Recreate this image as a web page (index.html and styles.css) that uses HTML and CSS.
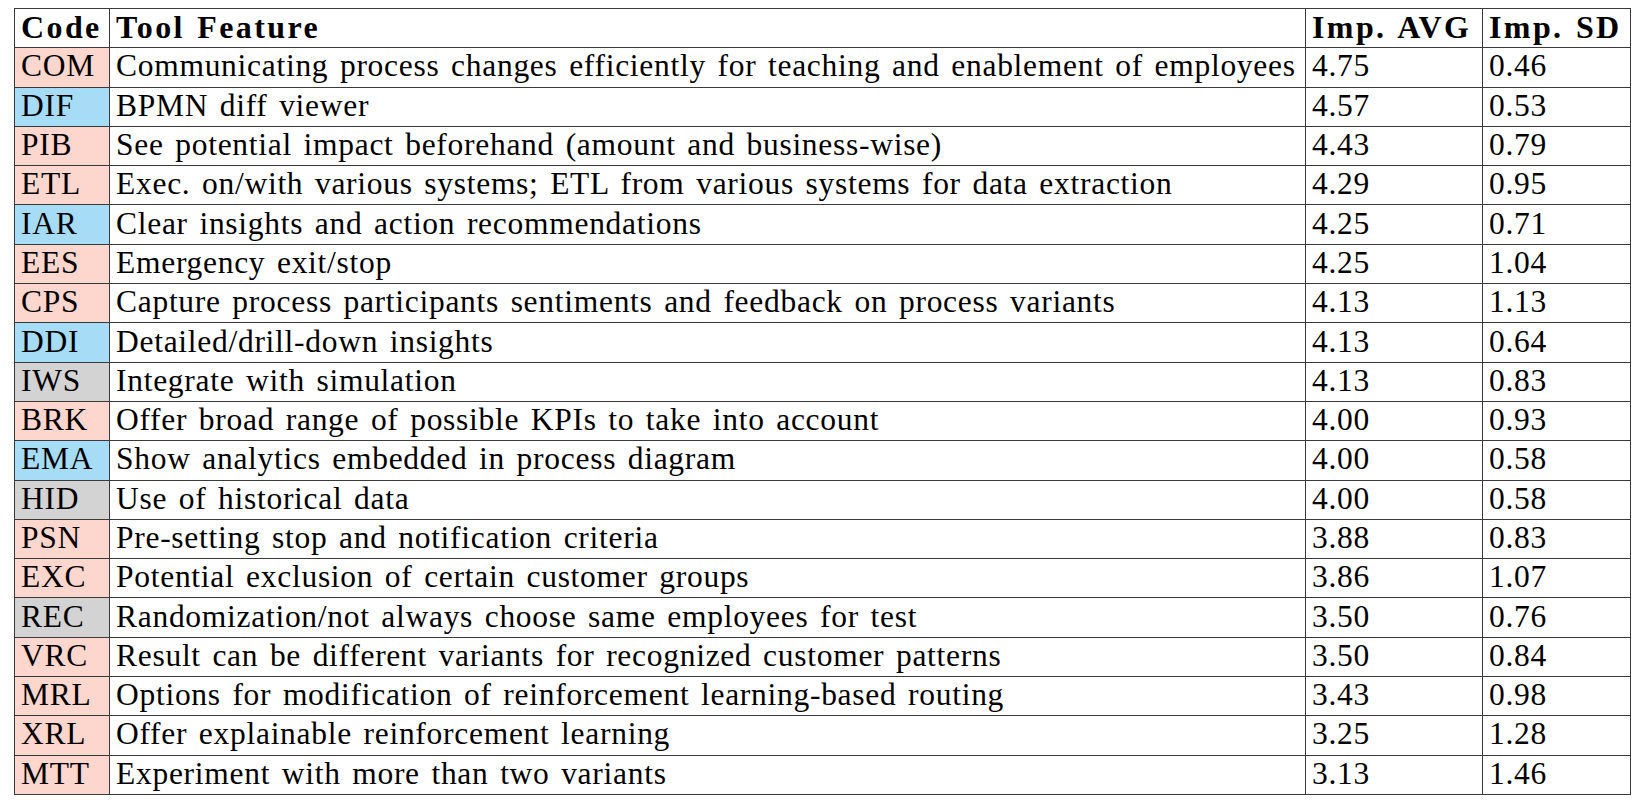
FILE: index.html
```html
<!DOCTYPE html>
<html>
<head>
<meta charset="utf-8">
<link rel="stylesheet" href="styles.css">
</head>
<body>
<table class="tbl">
<colgroup>
<col class="c-code"><col class="c-feat"><col class="c-avg"><col class="c-sd">
</colgroup>
<thead>
<tr><th>Code</th><th>Tool Feature</th><th>Imp. AVG</th><th>Imp. SD</th></tr>
</thead>
<tbody>
<tr><td class="pink">COM</td><td>Communicating process changes efficiently for teaching and enablement of employees</td><td>4.75</td><td>0.46</td></tr>
<tr><td class="blue">DIF</td><td>BPMN diff viewer</td><td>4.57</td><td>0.53</td></tr>
<tr><td class="pink">PIB</td><td>See potential impact beforehand (amount and business-wise)</td><td>4.43</td><td>0.79</td></tr>
<tr><td class="pink">ETL</td><td>Exec. on/with various systems; ETL from various systems for data extraction</td><td>4.29</td><td>0.95</td></tr>
<tr><td class="blue">IAR</td><td>Clear insights and action recommendations</td><td>4.25</td><td>0.71</td></tr>
<tr><td class="pink">EES</td><td>Emergency exit/stop</td><td>4.25</td><td>1.04</td></tr>
<tr><td class="pink">CPS</td><td>Capture process participants sentiments and feedback on process variants</td><td>4.13</td><td>1.13</td></tr>
<tr><td class="blue">DDI</td><td>Detailed/drill-down insights</td><td>4.13</td><td>0.64</td></tr>
<tr><td class="gray">IWS</td><td>Integrate with simulation</td><td>4.13</td><td>0.83</td></tr>
<tr><td class="pink">BRK</td><td>Offer broad range of possible KPIs to take into account</td><td>4.00</td><td>0.93</td></tr>
<tr><td class="blue">EMA</td><td>Show analytics embedded in process diagram</td><td>4.00</td><td>0.58</td></tr>
<tr><td class="gray">HID</td><td>Use of historical data</td><td>4.00</td><td>0.58</td></tr>
<tr><td class="pink">PSN</td><td>Pre-setting stop and notification criteria</td><td>3.88</td><td>0.83</td></tr>
<tr><td class="pink">EXC</td><td>Potential exclusion of certain customer groups</td><td>3.86</td><td>1.07</td></tr>
<tr><td class="gray">REC</td><td>Randomization/not always choose same employees for test</td><td>3.50</td><td>0.76</td></tr>
<tr><td class="pink">VRC</td><td>Result can be different variants for recognized customer patterns</td><td>3.50</td><td>0.84</td></tr>
<tr><td class="pink">MRL</td><td>Options for modification of reinforcement learning-based routing</td><td>3.43</td><td>0.98</td></tr>
<tr><td class="pink">XRL</td><td>Offer explainable reinforcement learning</td><td>3.25</td><td>1.28</td></tr>
<tr><td class="pink">MTT</td><td>Experiment with more than two variants</td><td>3.13</td><td>1.46</td></tr>
</tbody>
</table>
</body>
</html>
```
FILE: styles.css
```css
html, body {
  margin: 0;
  padding: 0;
  background: #ffffff;
}
body {
  padding: 8px 0 0 14px;
  font-family: "Liberation Serif", "Times New Roman", serif;
  color: #000;
}
.tbl {
  border-collapse: collapse;
  table-layout: fixed;
  width: 1616px;
  font-size: 31.5px;
  letter-spacing: 0.72px;
  word-spacing: 3px;
}
.c-code { width: 95px; }
.c-feat { width: 1196px; }
.c-avg { width: 177px; }
.c-sd { width: 148px; }
.tbl th, .tbl td {
  border: 1.5px solid #3a3a3a;
  height: 39.3px;
  padding: 0 0 2px 6px;
  box-sizing: border-box;
  text-align: left;
  white-space: nowrap;
  overflow: hidden;
  line-height: 36px;
  vertical-align: middle;
}
.tbl th {
  font-weight: bold;
  font-size: 32px;
  letter-spacing: 2.4px;
  word-spacing: 2px;
}
.pink { background: #fdd6cd; }
.blue { background: #a6dcf6; }
.gray { background: #d3d3d3; }
```
